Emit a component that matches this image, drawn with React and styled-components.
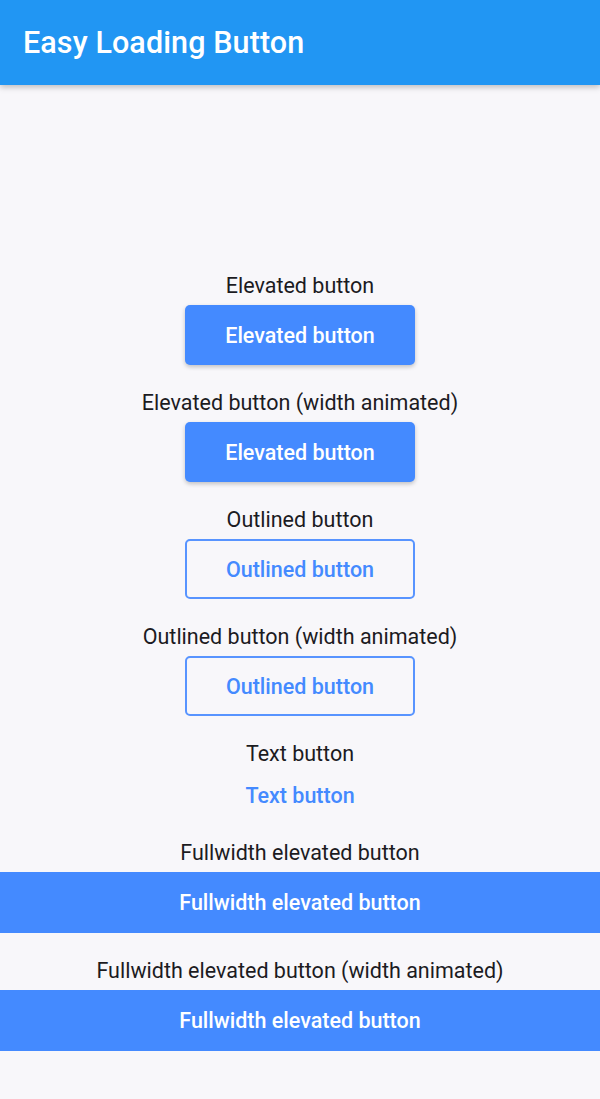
import React from "react";
import styled, { createGlobalStyle, css } from "styled-components";

const GlobalStyle = createGlobalStyle`
    html, body {
        margin: 0;
        padding: 0;
        background: #f8f7fa;
        font-family: Roboto, "Noto Sans", sans-serif;
    }
`;

const Page = styled.div`
    min-height: 1099px;
    background: #f8f7fa;
`;

const AppBar = styled.header`
    height: 85px;
    background: #2196f3;
    display: flex;
    align-items: center;
    padding: 0 23px;
    box-shadow: 0 2px 6px rgba(0, 0, 0, 0.25);
    position: relative;
    z-index: 1;
`;

const Title = styled.h1`
    margin: 0;
    font-size: 30.5px;
    font-weight: 500;
    color: #fff;
    letter-spacing: 0.1px;
`;

const Content = styled.main`
    display: flex;
    flex-direction: column;
    align-items: center;
    padding-top: 188px;
`;

const Group = styled.section`
    width: 100%;
    display: flex;
    flex-direction: column;
    align-items: center;
    gap: 7px;
    margin-bottom: ${(p) => p.$after}px;
`;

const Label = styled.div`
    font-size: 21.5px;
    line-height: 24px;
    padding-top: 1px;
    color: #1c1b1f;
`;

const Button = styled.button`
    font-family: Roboto, "Noto Sans", sans-serif;
    font-size: 21.5px;
    font-weight: 500;
    height: 60px;
    width: 230px;
    border-radius: 5px;
    border: none;
    cursor: pointer;
    display: flex;
    align-items: center;
    justify-content: center;
    padding: 0;

    ${(p) =>
        p.$variant === "elevated" &&
        css`
            background: #448aff;
            color: #fff;
            box-shadow: 0 2px 4px rgba(0, 0, 0, 0.22);
        `}

    ${(p) =>
        p.$variant === "outlined" &&
        css`
            background: transparent;
            color: #448aff;
            border: 2px solid #5894ff;
        `}

    ${(p) =>
        p.$variant === "text" &&
        css`
            background: transparent;
            color: #448aff;
            height: 44px;
        `}

    ${(p) =>
        p.$full &&
        css`
            width: 100%;
            height: 61px;
            border-radius: 0;
            box-shadow: none;
        `}
`;

const items = [
    { label: "Elevated button", text: "Elevated button", variant: "elevated", after: 25 },
    { label: "Elevated button (width animated)", text: "Elevated button", variant: "elevated", after: 25 },
    { label: "Outlined button", text: "Outlined button", variant: "outlined", after: 25 },
    { label: "Outlined button (width animated)", text: "Outlined button", variant: "outlined", after: 25 },
    { label: "Text button", text: "Text button", variant: "text", after: 23 },
    {
        label: "Fullwidth elevated button",
        text: "Fullwidth elevated button",
        variant: "elevated",
        full: true,
        after: 25,
    },
    {
        label: "Fullwidth elevated button (width animated)",
        text: "Fullwidth elevated button",
        variant: "elevated",
        full: true,
        after: 0,
    },
];

const App = () => {
    return (
        <Page>
            <GlobalStyle />
            <AppBar>
                <Title>Easy Loading Button</Title>
            </AppBar>
            <Content>
                {items.map((item) => (
                    <Group key={item.label} $after={item.after}>
                        <Label>{item.label}</Label>
                        <Button $variant={item.variant} $full={item.full}>
                            {item.text}
                        </Button>
                    </Group>
                ))}
            </Content>
        </Page>
    );
};

export default App;
